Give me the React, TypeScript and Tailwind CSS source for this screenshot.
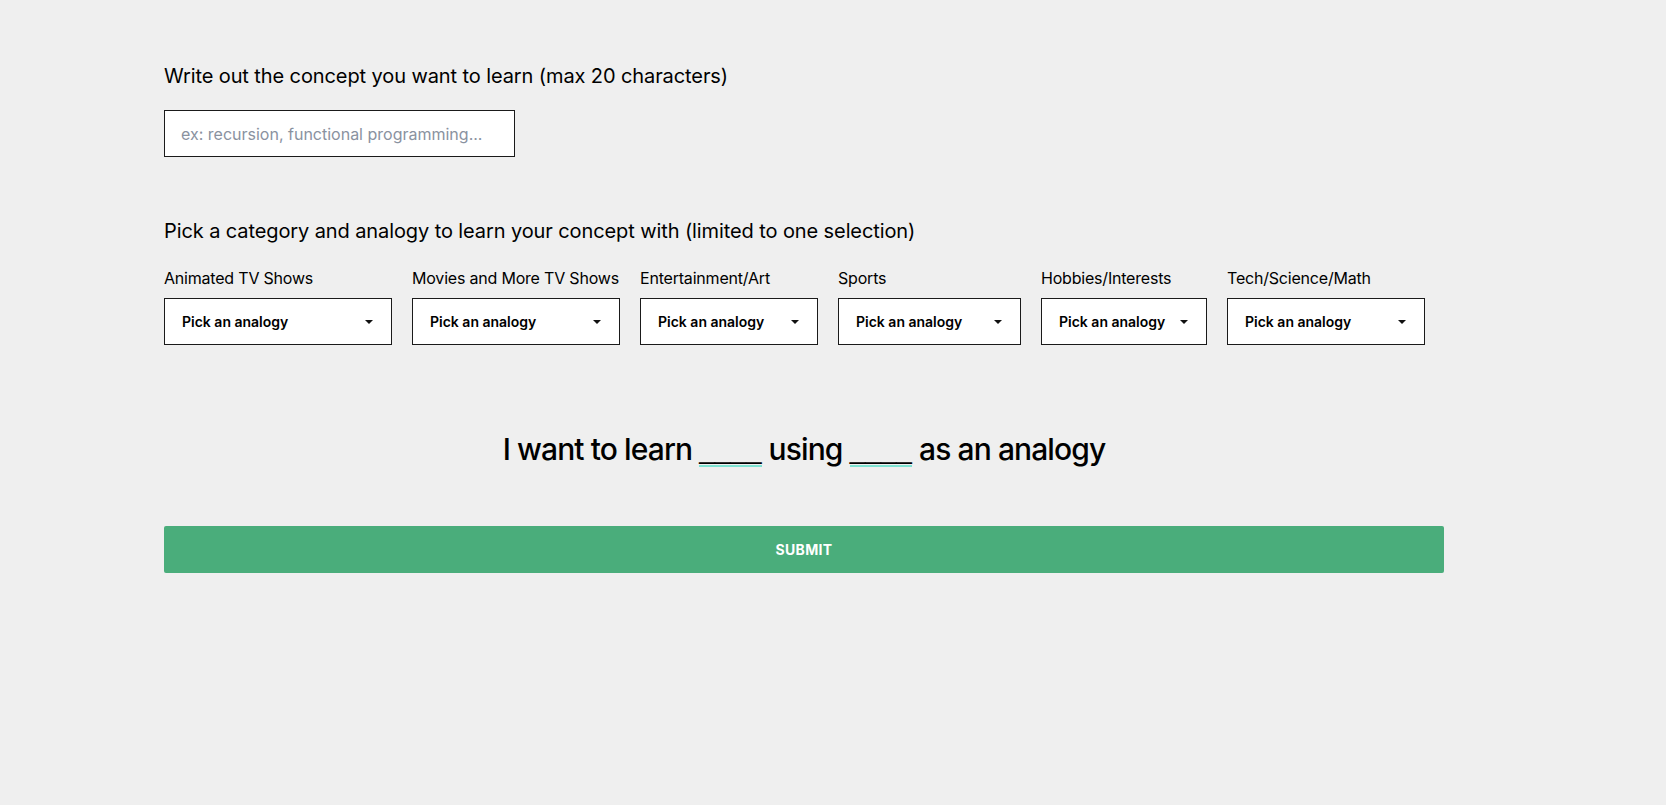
import React, { useState } from "react";

const categories = [
  { label: "Animated TV Shows", width: "w-[228px]" },
  { label: "Movies and More TV Shows", width: "w-[208px]" },
  { label: "Entertainment/Art", width: "w-[178px]" },
  { label: "Sports", width: "w-[183px]" },
  { label: "Hobbies/Interests", width: "w-[166px]" },
  { label: "Tech/Science/Math", width: "w-[198px]" },
];

const AnalogySelect: React.FC<{ label: string; width: string }> = ({ label, width }) => {
  return (
    <div className="flex flex-col">
      <label className="text-[16px] leading-6 tracking-[-0.2px] text-black">{label}</label>
      <div
        className={`mt-[8px] flex h-[47px] items-center justify-between border border-[#1a1a1a] bg-white pl-[17px] pr-[18px] ${width}`}
      >
        <span className="text-[14px] font-semibold text-black">Pick an analogy</span>
        <svg width="8" height="4" viewBox="0 0 8 4" className="shrink-0">
          <path d="M0 0 L8 0 L4 4 Z" fill="#111" />
        </svg>
      </div>
    </div>
  );
};

const Blank: React.FC = () => (
  <span className="relative -top-[2px] inline-block border-b-2 border-[#7ee3d2] pb-[4px] align-baseline font-['Liberation_Sans',sans-serif] text-[28px] leading-[24px] tracking-normal">
    ____
  </span>
);

const App: React.FC = () => {
  const [concept, setConcept] = useState("");

  return (
    <div className="min-h-screen bg-[#efefef] font-['Inter','Liberation_Sans',sans-serif] text-black">
      <div className="ml-[164px] w-[1280px] pt-[62px]">
        <h2 className="text-[20px] leading-7 font-normal tracking-[-0.1px]">
          Write out the concept you want to learn (max 20 characters)
        </h2>
        <input
          type="text"
          maxLength={20}
          value={concept}
          onChange={(e) => setConcept(e.target.value)}
          placeholder="ex: recursion, functional programming..."
          className="mt-[20px] h-[47px] w-[351px] border border-[#1a1a1a] bg-white px-[16px] text-[16px] outline-none placeholder:text-[#8a929f]"
        />

        <h2 className="mt-[60px] text-[20px] leading-7 font-normal tracking-[-0.1px]">
          Pick a category and analogy to learn your concept with (limited to one selection)
        </h2>
        <div className="mt-[21px] flex gap-[20px]">
          {categories.map((c) => (
            <AnalogySelect key={c.label} label={c.label} width={c.width} />
          ))}
        </div>

        <div className="mt-[86px] h-[36px] text-center text-[30px] leading-9 font-medium tracking-[-0.9px]">
          I want to learn <Blank /> using <Blank /> as an analogy
        </div>

        <button
          type="button"
          className="mt-[59px] flex h-[47px] w-full items-center justify-center rounded-[2px] bg-[#4aad7b] text-[14px] font-bold tracking-wide text-white"
        >
          SUBMIT
        </button>
      </div>
    </div>
  );
};

export default App;
